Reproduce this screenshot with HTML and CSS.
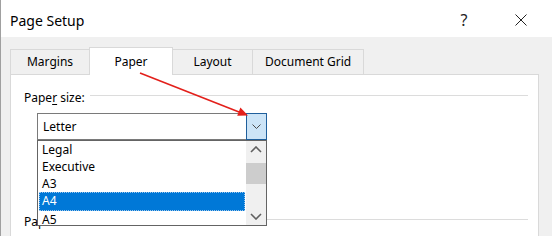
FILE: index.html
```html
<!DOCTYPE html>
<html lang="en">
<head>
    <meta charset="UTF-8">
    <title>Page Setup</title>
    <link rel="stylesheet" href="styles.css">
</head>
<body>

    <div class="dialog">
        <!-- Title bar -->
        <div class="titlebar">
            <span class="title">Page Setup</span>
            <div class="caption-btns">
                <span class="cap-btn help">?</span>
                <span class="cap-btn close">
                    <svg width="12" height="12" viewBox="0 0 12 12"><path d="M0.5 0.5 L11.5 11.5 M11.5 0.5 L0.5 11.5" stroke="#222" stroke-width="1" fill="none"/></svg>
                </span>
            </div>
        </div>

        <!-- Tabs -->
        <div class="tabs">
            <div class="tab">Margins</div>
            <div class="tab active">Paper</div>
            <div class="tab">Layout</div>
            <div class="tab last">Document Grid</div>
        </div>

        <!-- Paper tab page -->
        <div class="panel">
            <div class="group-head">
                <span>Pape<u>r</u> size:</span>
                <span class="rule"></span>
            </div>

            <div class="combo">
                <div class="combo-value">Letter</div>
                <div class="combo-btn">
                    <svg width="9" height="5" viewBox="0 0 9 5"><path d="M0.5 0.5 L4.5 4.5 L8.5 0.5" stroke="#4a4a4a" stroke-width="1" fill="none"/></svg>
                </div>

                <!-- open dropdown list -->
                <div class="dropdown">
                    <ul class="options">
                        <li>Legal</li>
                        <li>Executive</li>
                        <li>A3</li>
                        <li class="selected">A4</li>
                        <li>A5</li>
                    </ul>
                    <div class="scrollbar">
                        <div class="sb-btn">
                            <svg width="12" height="7" viewBox="0 0 12 7"><path d="M1 6 L6 1 L11 6" stroke="#606060" stroke-width="1.6" fill="none"/></svg>
                        </div>
                        <div class="sb-track"><div class="sb-thumb"></div></div>
                        <div class="sb-btn">
                            <svg width="12" height="7" viewBox="0 0 12 7"><path d="M1 1 L6 6 L11 1" stroke="#606060" stroke-width="1.6" fill="none"/></svg>
                        </div>
                    </div>
                </div>
            </div>

            <div class="group-head second">
                <span>Paper source:</span>
                <span class="rule"></span>
            </div>
        </div>

        <!-- red pointer drawn over the dialog -->
        <svg class="pointer-arrow" width="552" height="236" viewBox="0 0 552 236">
            <line x1="140" y1="73" x2="239" y2="112" stroke="#e3201b" stroke-width="1.6"/>
            <polygon points="248,115.5 237.2,115.8 240.4,107.6" fill="#e3201b"/>
        </svg>
    </div>

</body>
</html>
```

FILE: styles.css
```css
body {
    margin: 0;
    font-family: "Noto Sans", "Open Sans", sans-serif;
    font-size: 12px;
    color: #000;
    background-color: #f0f0f0;
}

.dialog {
    position: relative;
    width: 551px;
    height: 236px;
    overflow: hidden;
    background-color: #f0f0f0;
    border-left: 1px solid #a0a0a0;
}

/* Title bar */
.titlebar {
    height: 37px;
    background-color: white;
    display: flex;
    align-items: center;
    padding: 3px 13px 0 9px;
    box-sizing: border-box;
}

.title {
    font-size: 14px;
}

.caption-btns {
    margin-left: auto;
    display: flex;
    gap: 21px;
}

.cap-btn {
    width: 36px;
    height: 30px;
    display: flex;
    align-items: center;
    justify-content: center;
}

.help {
    font-size: 16px;
    color: #222;
}

/* Tabs */
.tabs {
    display: flex;
    align-items: flex-end;
    margin: 10px 0 0 9px;
}

.tab {
    min-width: 79px;
    height: 25px;
    line-height: 24px;
    padding: 0 12px;
    box-sizing: border-box;
    text-align: center;
    border-top: 1px solid #d9d9d9;
    border-left: 1px solid #d9d9d9;
}

.tab.last {
    border-right: 1px solid #d9d9d9;
}

.tab.active {
    min-width: 84px;
    height: 28px;
    padding-top: 2px;
    margin-bottom: -1px;
    background-color: white;
    border-right: 1px solid #d9d9d9;
    position: relative;
    z-index: 2;
}

.tab.active + .tab {
    border-left: none;
}

/* Tab page */
.panel {
    margin-left: 9px;
    width: 529px;
    height: 200px;
    box-sizing: border-box;
    background-color: white;
    border: 1px solid #d9d9d9;
    padding: 14px 10px 0 13px;
}

.group-head {
    display: flex;
    align-items: center;
    height: 17px;
    line-height: 17px;
}

.group-head u {
    text-decoration-thickness: 1px;
    text-underline-offset: 2px;
}

.group-head .rule {
    flex: 1;
    height: 1px;
    background-color: #dcdcdc;
    margin: 0 0 4px 5px;
}

.group-head.second {
    margin-top: 73px;
}

/* Combo box */
.combo {
    position: relative;
    display: flex;
    width: 230px;
    height: 27px;
    margin: 7px 0 0 13px;
    z-index: 3;
}

.combo-value {
    flex: 1;
    border: 1px solid #7a7a7a;
    border-right: none;
    padding-left: 5px;
    line-height: 25px;
}

.combo-btn {
    width: 21px;
    box-sizing: border-box;
    background-color: #cce4f7;
    border: 1px solid #1f5f9c;
    display: flex;
    align-items: center;
    justify-content: center;
}

.dropdown {
    position: absolute;
    top: 100%;
    left: 0;
    width: 230px;
    height: 86px;
    box-sizing: border-box;
    background-color: white;
    border: 1px solid #646464;
    display: flex;
}

.options {
    flex: 1;
    margin: 0;
    padding: 0;
    list-style: none;
    overflow: hidden;
}

.options li {
    height: 17px;
    line-height: 17px;
    padding-left: 4px;
}

.options li.selected {
    margin: 0 1px;
    padding-left: 2px;
    line-height: 15px;
    color: white;
    background-color: #0078d7;
    border: 1px dotted #9cc6ec;
}

.scrollbar {
    width: 20px;
    background-color: #f0f0f0;
    display: flex;
    flex-direction: column;
}

.sb-btn {
    height: 17px;
    display: flex;
    align-items: center;
    justify-content: center;
}

.sb-track {
    flex: 1;
    padding-top: 5px;
}

.sb-thumb {
    height: 21px;
    background-color: #cdcdcd;
}

.pointer-arrow {
    position: absolute;
    top: 0;
    left: -1px;
    pointer-events: none;
    z-index: 5;
}
```
